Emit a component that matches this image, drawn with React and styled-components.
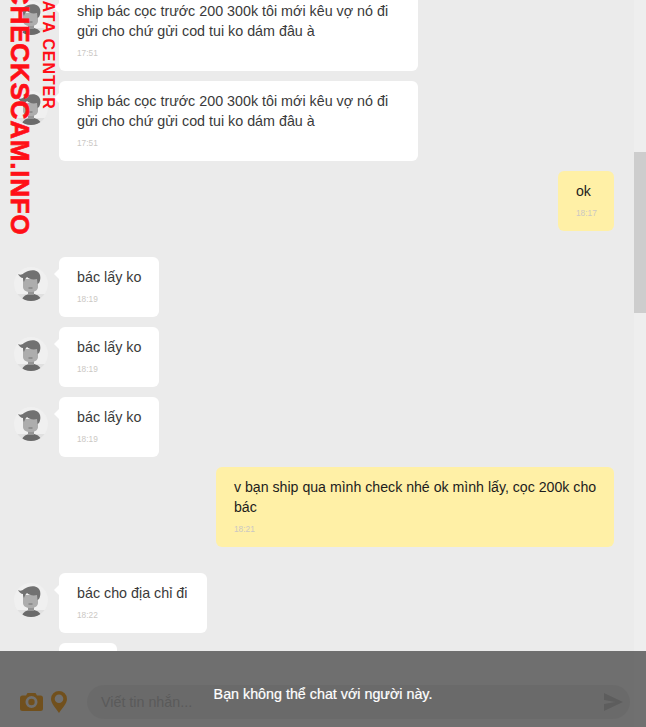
import React from 'react';
import styled, { createGlobalStyle } from 'styled-components';

const Global = createGlobalStyle`
  html, body { margin: 0; padding: 0; height: 100%; overflow: hidden; }
  body { font-family: "Liberation Sans", Arial, sans-serif; background: #ebebeb; }
`
const Page = styled.div`
  position: relative;
  display: flex;
  width: 646px;
  height: 727px;
  overflow: hidden;
  background: #ebebeb;
`
const Chat = styled.div`
  flex: 1;
  min-width: 0;
  display: flex;
  flex-flow: column;
  height: 727px;
  overflow: hidden;
`
const List = styled.div`
  flex: 1;
  min-height: 0;
  display: flex;
  flex-flow: column;
  gap: 10px;
  margin-top: -9px;
  padding: 0 20px 0 14px;
  overflow: hidden;
`
const Track = styled.div`
  flex: 0 0 12px;
  background: #eeeeee;
  padding-top: 152px;
`
const Thumb = styled.div`
  height: 161px;
  background: #cdcdcd;
`
const Row = styled.div`
  display: flex;
  flex-shrink: 0;
  align-items: flex-start;
  justify-content: ${props => (props.mine ? 'flex-end' : 'flex-start')};
  margin-top: ${props => props.gap || 0}px;
`
const Avatar = styled.svg`
  flex: 0 0 34px;
  width: 34px;
  height: 34px;
  margin: 10px 11px 0 0;
`
const Bubble = styled.div`
  position: relative;
  box-sizing: border-box;
  width: ${props => props.width}px;
  padding: 10px 10px 10px 18px;
  border-radius: 6px;
  background: ${props => (props.mine ? '#fff0a6' : '#ffffff')};
  color: ${props => (props.mine ? '#1d1d1d' : '#3a3a3a')};
  font-size: ${props => (props.mine ? '14.15px' : '14.3px')};
  line-height: 20px;
  ${props => !props.mine && `
    &::before {
      content: '';
      position: absolute;
      left: -5px;
      top: 12px;
      border-top: 5px solid transparent;
      border-bottom: 5px solid transparent;
      border-right: 5px solid #ffffff;
    }
  `}
`
const Time = styled.div`
  margin-top: 6px;
  margin-bottom: 1px;
  font-size: 8.3px;
  line-height: 13px;
  color: #cbc8c4;
`
const Composer = styled.div`
  flex: 0 0 76px;
  box-sizing: border-box;
  display: flex;
  align-items: flex-end;
  padding: 0 0 8px 20px;
  width: 646px;
  background: #ebebeb;
`
const Tools = styled.div`
  display: flex;
  align-items: center;
  gap: 8px;
  height: 34px;
  margin: 0 20px 0 0;
  color: #f0ab3e;
`
const Field = styled.div`
  display: flex;
  align-items: center;
  justify-content: space-between;
  box-sizing: border-box;
  width: 543px;
  height: 34px;
  padding: 0 7px 0 14px;
  border-radius: 17px;
  background: #e2e2e2;
  color: #bfbfbf;
  font-size: 14.3px;
`
const Blocker = styled.div`
  position: absolute;
  left: 0;
  right: 0;
  bottom: 0;
  height: 76px;
  padding-top: 35px;
  box-sizing: border-box;
  background: rgba(0, 0, 0, 0.53);
  color: #ffffff;
  font-size: 14.3px;
  line-height: 17px;
  text-align: center;
  -webkit-text-stroke: 0.2px #ffffff;
`
const MarkBig = styled.div`
  position: absolute;
  left: 5px;
  bottom: 491px;
  writing-mode: vertical-rl;
  color: #ff0f17;
  font-size: 26px;
  font-weight: 700;
  line-height: 30px;
  white-space: nowrap;
  letter-spacing: 0.8px;
  -webkit-text-stroke: 0.7px #ff0f17;
`
const MarkSmall = styled.div`
  position: absolute;
  left: 39px;
  bottom: 617px;
  writing-mode: vertical-rl;
  color: #ff0f17;
  font-size: 16px;
  font-weight: 700;
  line-height: 18px;
  white-space: nowrap;
  letter-spacing: 0.9px;
`

const FaceIcon = () => (
  <Avatar viewBox="0 0 34 34">
    <defs>
      <clipPath id="face-clip"><circle cx="17" cy="17" r="17" /></clipPath>
    </defs>
    <circle cx="17" cy="17" r="17" fill="#f0f0f0" />
    <g clipPath="url(#face-clip)">
      <rect x="0" y="27" width="34" height="7" fill="#e0e0e0" />
      <path d="M8 34c0-4 3-6 7-7h5c4 1 7 3 7 7z" fill="#6a6a6a" />
      <path d="M14 22h6v6h-6z" fill="#969696" />
      <path d="M9 12h15v8c0 3-3 5-7.500 5S9 23 9 20z" fill="#adadad" />
      <path d="M4 7c2 1 4 1 6-1 4-3 11-4 14-1 3 2 3 8 1 11l-1.500 1-.5-5c-4 1-8 0-10-2-1 1-2 2-3 5-1-2-1-3-1-4-2 0-4-2-5-4z" fill="#717171" />
      <path d="M14.500 21h4" stroke="#707070" strokeWidth="1" />
    </g>
  </Avatar>
)

const CameraIcon = () => (
  <svg width="23" height="18" viewBox="0 0 23 18">
    <path fill="currentColor" fillRule="evenodd" d="M7.500 0h8l1.500 2.500h3.500A2.500 2.500 0 0 1 23 5v10.500a2.500 2.500 0 0 1-2.500 2.500h-18A2.500 2.500 0 0 1 0 15.500V5a2.500 2.500 0 0 1 2.500-2.500H6zM11.500 3a6 6 0 1 0 0 12 6 6 0 0 0 0-12zm0 2.800a3.200 3.200 0 1 1 0 6.400 3.200 3.200 0 0 1 0-6.400z" />
  </svg>
)

const PinIcon = () => (
  <svg width="16" height="22" viewBox="0 0 16 22">
    <path fill="currentColor" fillRule="evenodd" d="M8 0a8 8 0 0 0-8 8c0 4.500 5 9.500 8 14 3-4.500 8-9.500 8-14a8 8 0 0 0-8-8zm0 3.500a4.300 4.300 0 1 1 0 8.600 4.300 4.300 0 0 1 0-8.600z" />
  </svg>
)

const SendIcon = () => (
  <svg width="20" height="20" viewBox="0 0 20 20">
    <path fill="#c6c6c6" d="M1 1l19 9-19 9v-7l11-2-11-2z" />
  </svg>
)

const messages = [
  { text: 'ship bác cọc trước 200 300k tôi mới kêu vợ nó đi gửi cho chứ gửi cod tui ko dám đâu à', time: '17:51', width: 359 },
  { text: 'ship bác cọc trước 200 300k tôi mới kêu vợ nó đi gửi cho chứ gửi cod tui ko dám đâu à', time: '17:51', width: 359 },
  { text: 'ok', time: '18:17', width: 56, mine: true },
  { text: 'bác lấy ko', time: '18:19', width: 100, gap: 16 },
  { text: 'bác lấy ko', time: '18:19', width: 100 },
  { text: 'bác lấy ko', time: '18:19', width: 100 },
  { text: 'v bạn ship qua mình check nhé ok mình lấy, cọc 200k cho bác', time: '18:21', width: 398, mine: true },
  { text: 'bác cho địa chỉ đi', time: '18:22', width: 148, gap: 16 },
  { text: 'ok', time: '18:23', width: 58 },
];

const App = () => (
  <Page>
    <Global />
    <Chat>
      <List>
        {messages.map((m, i) => (
          <Row key={i} mine={m.mine} gap={m.gap}>
            {!m.mine && <FaceIcon />}
            <Bubble mine={m.mine} width={m.width}>
              {m.text}
              <Time>{m.time}</Time>
            </Bubble>
          </Row>
        ))}
      </List>
      <Composer>
        <Tools>
          <CameraIcon />
          <PinIcon />
        </Tools>
        <Field>
          Viết tin nhắn...
          <SendIcon />
        </Field>
      </Composer>
    </Chat>
    <Track><Thumb /></Track>
    <MarkBig>CHECKSCAM.INFO</MarkBig>
    <MarkSmall>DATA CENTER</MarkSmall>
    <Blocker>Bạn không thể chat với người này.</Blocker>
  </Page>
);

export default App;
